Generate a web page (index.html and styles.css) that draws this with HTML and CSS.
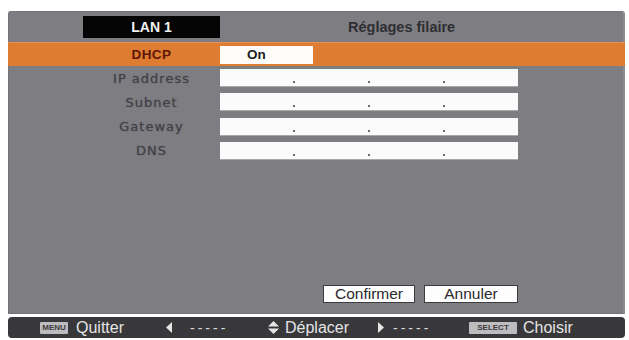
FILE: index.html
```html
<!DOCTYPE html>
<html lang="fr">
<head>
<meta charset="utf-8">
<title>LAN 1 - Réglages filaire</title>
<link rel="stylesheet" href="styles.css">
</head>
<body>
<div class="screen">
  <div class="panel">
    <div class="row header">
      <div class="tab">LAN 1</div>
      <div class="title">Réglages filaire</div>
    </div>
    <div class="row selected">
      <div class="label">DHCP</div>
      <div class="value-on">On</div>
    </div>
    <div class="fields">
      <div class="row field-row">
        <div class="label">IP address</div>
        <div class="ipfield"><span></span><span></span><span></span></div>
      </div>
      <div class="row field-row">
        <div class="label">Subnet</div>
        <div class="ipfield"><span></span><span></span><span></span></div>
      </div>
      <div class="row field-row">
        <div class="label">Gateway</div>
        <div class="ipfield"><span></span><span></span><span></span></div>
      </div>
      <div class="row field-row">
        <div class="label">DNS</div>
        <div class="ipfield"><span></span><span></span><span></span></div>
      </div>
    </div>
    <div class="spacer"></div>
    <div class="buttons">
      <div class="btn btn-confirm">Confirmer</div>
      <div class="btn btn-cancel">Annuler</div>
    </div>
  </div>
  <div class="bar">
    <span class="key key-menu">MENU</span>
    <span class="txt txt-quit">Quitter</span>
    <span class="icon icon-left"><svg width="8" height="11" viewBox="0 0 8 11"><path d="M7 0 L7 11 L1 5.5 Z" fill="#e6e6e6"/></svg></span>
    <span class="dash dash-1">-----</span>
    <span class="icon icon-updown"><svg width="11" height="13" viewBox="0 0 11 13"><path d="M5.5 0 L11 5.5 L0 5.5 Z M0 7.5 L11 7.5 L5.5 13 Z" fill="#e6e6e6"/></svg></span>
    <span class="txt txt-move">Déplacer</span>
    <span class="icon icon-right"><svg width="8" height="11" viewBox="0 0 8 11"><path d="M1 0 L1 11 L7 5.5 Z" fill="#e6e6e6"/></svg></span>
    <span class="dash dash-2">-----</span>
    <span class="key key-select">SELECT</span>
    <span class="txt txt-choose">Choisir</span>
  </div>
</div>
</body>
</html>
```

FILE: styles.css
```css
html, body {
  margin: 0;
  padding: 0;
  background: #ffffff;
}

.screen {
  width: 617px;
  margin-left: 8px;
  padding-top: 11px;
  font-family: "DejaVu Sans", Verdana, sans-serif;
}

.panel {
  height: 303px;
  box-sizing: border-box;
  background: #7e7d82;
  border: 1px solid #74737a;
  border-right: 2px solid #8c8b90;
  border-radius: 3px 3px 0 0;
  padding-top: 4px;
  display: flex;
  flex-direction: column;
}

.row {
  display: grid;
  grid-template-columns: 74px 137px 298px 1fr;
  align-items: center;
}

.header {
  height: 22px;
}

.tab {
  grid-column: 2;
  height: 22px;
  background: #050505;
  color: #f2f2f2;
  font-family: "Liberation Sans", Arial, sans-serif;
  font-weight: bold;
  font-size: 14px;
  line-height: 22px;
  text-align: center;
}

.title {
  grid-column: 3 / 5;
  padding-left: 128px;
  color: #2e2e33;
  font-family: "Liberation Sans", Arial, sans-serif;
  font-weight: bold;
  font-size: 14.5px;
}

.selected {
  margin-top: 4px;
  height: 23px;
  margin-left: -1px;
  margin-right: -2px;
  padding-left: 1px;
  background: #de7d31;
  border-top: 1px solid #e89050;
}

.label {
  grid-column: 2;
  text-align: center;
  color: #424147;
  font-size: 13px;
  letter-spacing: 1px;
  text-shadow: 0 0 1px rgba(60, 60, 66, 0.6);
}

.selected .label {
  color: #5e1709;
  font-family: "Liberation Sans", Arial, sans-serif;
  font-weight: bold;
  font-size: 13.5px;
  letter-spacing: 0.4px;
  text-shadow: none;
}

.value-on {
  grid-column: 3;
  width: 93px;
  height: 18px;
  background: #fdfcf8;
  color: #1e1e1e;
  font-family: "Liberation Sans", Arial, sans-serif;
  font-weight: bold;
  font-size: 13.5px;
  line-height: 18px;
  padding-left: 27px;
  box-sizing: border-box;
}

.fields {
  margin-top: 3px;
  display: flex;
  flex-direction: column;
  gap: 6.3px;
}

.field-row {
  height: 18px;
}

.ipfield {
  grid-column: 3;
  height: 18px;
  background: #fbfbfb;
  border-bottom: 1px solid #a9a9ad;
  box-sizing: border-box;
  display: flex;
  justify-content: space-evenly;
  align-items: flex-end;
  padding: 0 0 3px 0;
}

.ipfield span {
  width: 2px;
  height: 2px;
  background: #6a6a70;
}

.spacer {
  flex: 1;
}

.buttons {
  display: flex;
  gap: 9px;
  padding-left: 314px;
  margin-bottom: 10px;
}

.btn {
  height: 18px;
  box-sizing: border-box;
  background: #fdfdfd;
  border: 1px solid #3c3c40;
  color: #2a2a2e;
  font-family: "Liberation Sans", Arial, sans-serif;
  font-size: 15.5px;
  line-height: 16px;
  text-align: center;
}

.btn-confirm {
  width: 92px;
}

.btn-cancel {
  width: 94px;
}

.bar {
  margin-top: 3px;
  height: 21px;
  background: #38383b;
  border-radius: 4px;
  display: flex;
  align-items: center;
  padding-left: 32px;
  color: #e4e4e4;
  font-family: "Liberation Sans", Arial, sans-serif;
  font-size: 16px;
}

.key {
  height: 12px;
  background: #bdbdbf;
  color: #3a3a3d;
  font-size: 8px;
  font-weight: bold;
  line-height: 12px;
  text-align: center;
  border-radius: 1px;
}

.key-menu {
  width: 28px;
  margin-right: 8px;
}

.txt-quit {
  width: 89px;
}

.icon {
  display: flex;
  align-items: center;
}

.icon-left {
  width: 8px;
  margin-right: 17px;
}

.dash {
  letter-spacing: 3px;
  font-size: 14px;
  color: #d8d8d8;
}

.dash-1 {
  width: 78px;
}

.icon-updown {
  width: 11px;
  margin-right: 6px;
}

.txt-move {
  width: 92px;
}

.icon-right {
  width: 8px;
  margin-right: 8px;
}

.dash-2 {
  width: 76px;
}

.key-select {
  width: 48px;
  margin-right: 6px;
}
```
